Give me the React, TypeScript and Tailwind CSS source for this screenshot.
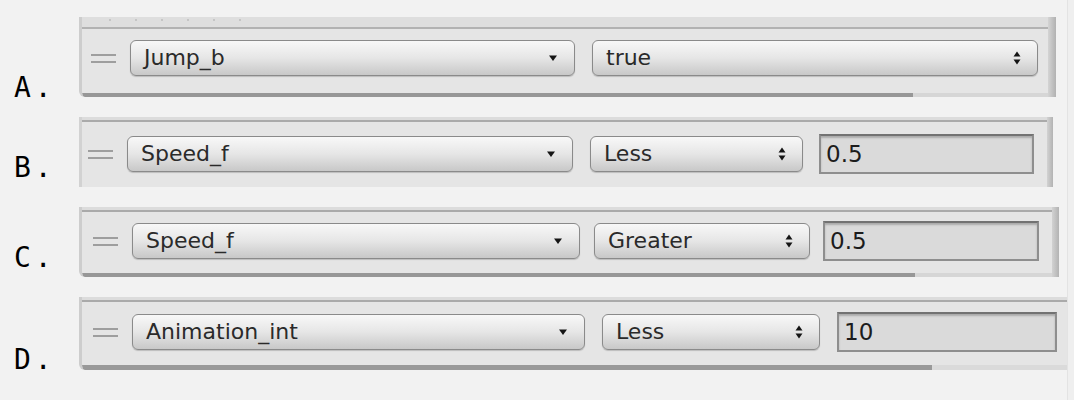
import React from 'react';

const font = { fontFamily: '"DejaVu Sans", "Liberation Sans", sans-serif' };
const mono = { fontFamily: '"DejaVu Sans Mono", "Liberation Mono", monospace' };

const Grip: React.FC = () => (
  <div className="flex w-[25px] shrink-0 flex-col gap-[5px]">
    <div className="h-[2px] bg-[#9e9e9e]" />
    <div className="h-[2px] bg-[#9e9e9e]" />
  </div>
);

const ArrowDown = () => (
  <svg width="10" height="7" viewBox="0 0 10 7">
    <path d="M1 0.5 L9 0.5 L5 6 Z" fill="#151515" />
  </svg>
);

const ArrowUpDown = () => (
  <svg width="8" height="14" viewBox="0 0 8 14">
    <path d="M0.5 5.5 L7.5 5.5 L4 0.5 Z" fill="#151515" />
    <path d="M0.5 8.5 L7.5 8.5 L4 13.5 Z" fill="#151515" />
  </svg>
);

interface SelectProps {
  value: string;
  double?: boolean;
  className: string;
}

const Select: React.FC<SelectProps> = ({ value, double, className }) => (
  <div
    className={`flex h-[36px] shrink-0 items-center justify-between rounded-[6px] border border-[#8a8a8a] bg-linear-to-b from-[#f8f8f8] via-[#e6e6e6] to-[#c8c8c8] pl-[13px] pr-[16px] text-[22px] text-[#2a2a2a] shadow-[0_1px_1px_rgba(0,0,0,0.18)] ${className}`}
    style={font}
  >
    <span className="leading-none">{value}</span>
    {double ? <ArrowUpDown /> : <ArrowDown />}
  </div>
);

const Field: React.FC<{ value: string; className: string }> = ({ value, className }) => (
  <div
    className={`flex h-[40px] shrink-0 items-center border-2 border-[#8e8e8e] border-t-[#727272] bg-[#dadada] pl-[5px] text-[23px] text-[#1c1c1c] shadow-[inset_0_2px_2px_rgba(0,0,0,0.22)] ${className}`}
    style={font}
  >
    {value}
  </div>
);

const Label: React.FC<{ text: string; className: string }> = ({ text, className }) => (
  <div className="w-[79px] shrink-0 pl-[14px]">
    <div className={`text-[28px] leading-[28px] tracking-[4px] text-black ${className}`} style={mono}>
      {text}
    </div>
  </div>
);

export default function App() {
  return (
    <div className="flex h-[400px] w-[1074px] bg-[#f2f2f2]">
      <div className="flex w-[1067px] flex-col gap-[20px] pt-[17px]">
        {/* A */}
        <div className="flex h-[80px]">
          <Label text="A." className="mt-[57px]" />
          <div className="flex w-[977px]">
            <div className="flex flex-1 flex-col overflow-hidden rounded-bl-[6px] border-l-[3px] border-[#cdcdcd] bg-[#e5e5e5]">
              <div className="flex h-[10px] gap-[24px] bg-[#dedede] pl-[27px] pt-[2px]">
                {[0, 1, 2, 3, 4, 5].map((i) => (
                  <span key={i} className="h-[2px] w-[2px] rounded-full bg-[#bdbdbd]" />
                ))}
              </div>
              <div className="h-[2px] bg-[#b2b2b2]" />
              <div className="flex-1 pl-[9px] pt-[11px]">
                <div className="flex h-[36px] items-center">
                  <Grip />
                  <Select value="Jump_b" className="ml-[14px] w-[445px]" />
                  <Select value="true" double className="ml-[17px] w-[446px]" />
                </div>
              </div>
              <div className="flex h-[4px] bg-[#d6d6d6]">
                <div className="w-[831px] bg-[#979797]" />
              </div>
            </div>
            <div className="w-[8px] bg-linear-to-r from-[#d4d4d4] to-[#b1b1b1]" />
          </div>
        </div>

        {/* B */}
        <div className="flex h-[70px]">
          <Label text="B." className="mt-[37px]" />
          <div className="flex w-[974px]">
            <div className="flex flex-1 flex-col border-l-[3px] border-[#d2d2d2] bg-[#e5e5e5]">
              <div className="h-[3px] bg-[#dcdcdc]" />
              <div className="h-[2px] bg-[#aaaaaa]" />
              <div className="flex-1 pl-[6px] pt-[12px]">
                <div className="flex h-[40px] items-center">
                  <Grip />
                  <Select value="Speed_f" className="ml-[14px] w-[446px]" />
                  <Select value="Less" double className="ml-[17px] w-[213px]" />
                  <Field value="0.5" className="ml-[16px] w-[215px]" />
                </div>
              </div>
            </div>
            <div className="w-[6px] bg-linear-to-r from-[#d2d2d2] to-[#b3b3b3]" />
          </div>
        </div>

        {/* C */}
        <div className="flex h-[70px]">
          <Label text="C." className="mt-[37px]" />
          <div className="flex w-[980px]">
            <div className="flex flex-1 flex-col overflow-hidden rounded-bl-[6px] border-l-[3px] border-[#cdcdcd] bg-[#e5e5e5]">
              <div className="h-[3px] bg-[#dcdcdc]" />
              <div className="h-[2px] bg-[#aaaaaa]" />
              <div className="flex-1 pl-[11px] pt-[9px]">
                <div className="flex h-[40px] items-center">
                  <Grip />
                  <Select value="Speed_f" className="ml-[14px] w-[448px]" />
                  <Select value="Greater" double className="ml-[14px] w-[216px]" />
                  <Field value="0.5" className="ml-[13px] w-[216px]" />
                </div>
              </div>
              <div className="flex h-[4px] bg-[#d6d6d6]">
                <div className="w-[833px] bg-[#979797]" />
              </div>
            </div>
            <div className="w-[7px] bg-linear-to-r from-[#d2d2d2] to-[#b3b3b3]" />
          </div>
        </div>

        {/* D */}
        <div className="flex h-[73px]">
          <Label text="D." className="mt-[49px]" />
          <div className="flex w-[988px] flex-col overflow-hidden rounded-bl-[6px] border-l-[3px] border-[#cdcdcd] bg-[#e5e5e5]">
            <div className="h-[3px] bg-[#dcdcdc]" />
            <div className="h-[2px] bg-[#aaaaaa]" />
            <div className="flex-1 pl-[11px] pt-[10px]">
              <div className="flex h-[40px] items-center">
                <Grip />
                <Select value="Animation_int" className="ml-[14px] w-[453px]" />
                <Select value="Less" double className="ml-[17px] w-[218px]" />
                <Field value="10" className="ml-[17px] w-[220px]" />
              </div>
            </div>
            <div className="flex h-[5px] bg-[#dadada]">
              <div className="w-[850px] bg-[#999999]" />
            </div>
          </div>
        </div>
      </div>
      <div className="flex-1 border-l border-[#e3e3e3] bg-[#efefef]" />
    </div>
  );
}
